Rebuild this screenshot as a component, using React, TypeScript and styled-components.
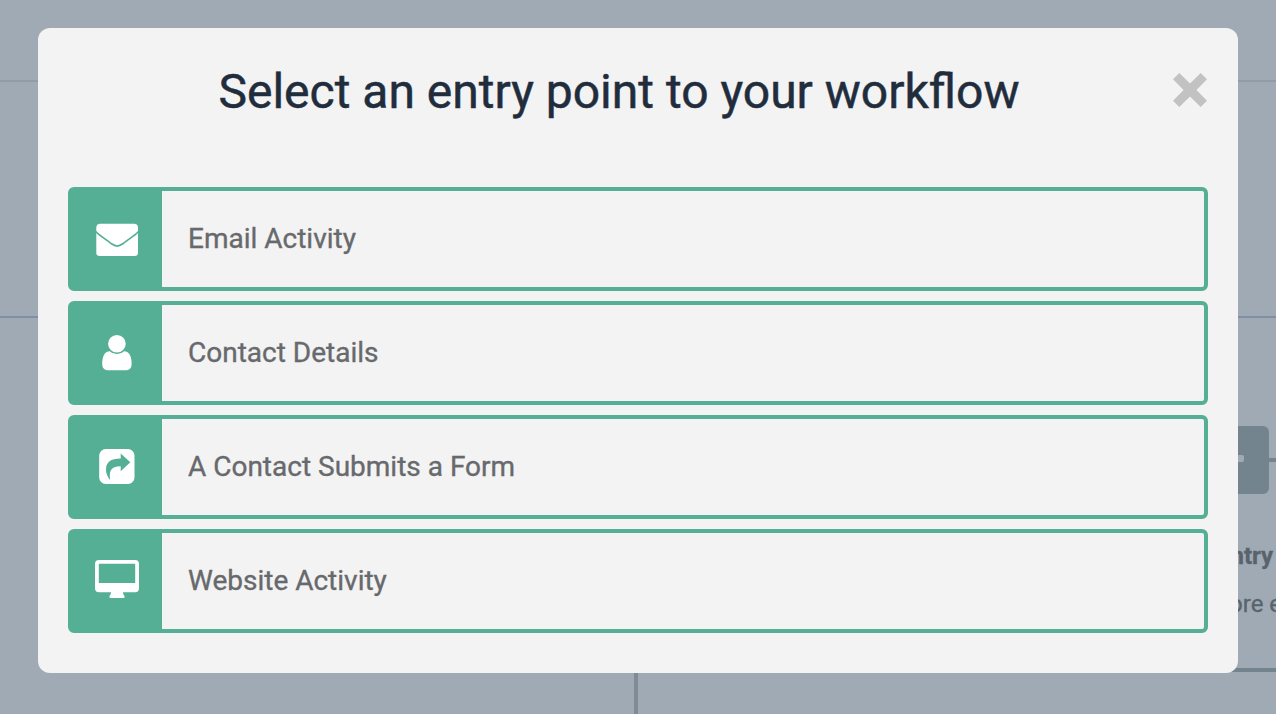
import React from "react";
import styled, { createGlobalStyle } from "styled-components";

const GlobalStyle = createGlobalStyle`
  *, *::before, *::after { box-sizing: border-box; }
  html, body { margin: 0; padding: 0; height: 100%; overflow: hidden; }
  body { font-family: Roboto, "Liberation Sans", sans-serif; background: #a0aab4; -webkit-font-smoothing: antialiased; }
`;

const Page = styled.main`
  position: relative;
  height: 714px;
  padding: 28px 38px 0;
  overflow: hidden;
  background: #a0aab4;
`;

/* Dimmed workflow canvas behind the dialog */
const Canvas = styled.div`
  position: absolute;
  inset: 0;
`;

const Line = styled.div<{ $x: number; $y: number; $w: number; $h: number; $color: string }>`
  position: absolute;
  left: ${(p) => p.$x}px;
  top: ${(p) => p.$y}px;
  width: ${(p) => p.$w}px;
  height: ${(p) => p.$h}px;
  background: ${(p) => p.$color};
`;

const AddNode = styled.div`
  position: absolute;
  left: 1201px;
  top: 426px;
  width: 68px;
  height: 68px;
  border-radius: 6px;
  background: #74848e;

  &::after {
    content: "";
    position: absolute;
    left: 25px;
    top: 29px;
    width: 18px;
    height: 7px;
    border-radius: 2px;
    background: #a0aab4;
  }
`;

const NodeLabel = styled.div<{ $x: number; $y: number; $bold?: boolean }>`
  position: absolute;
  left: ${(p) => p.$x}px;
  top: ${(p) => p.$y}px;
  font-size: 24px;
  line-height: 28px;
  font-weight: ${(p) => (p.$bold ? 700 : 400)};
  color: #59636d;
  -webkit-text-stroke: 0.3px #59636d;
  white-space: nowrap;
`;

const Dialog = styled.section`
  position: relative;
  width: 1200px;
  height: 645px;
  padding: 0 30px;
  border-radius: 12px;
  background: #f3f3f3;
`;

const Header = styled.header`
  display: flex;
  align-items: flex-start;
  height: 159px;
  padding-top: 36px;
`;

const Title = styled.h1`
  flex: 1;
  margin: 0;
  padding-right: 2px;
  font-size: 48px;
  line-height: 56px;
  font-weight: 400;
  text-align: center;
  color: #212d3d;
  -webkit-text-stroke: 0.5px #212d3d;
`;

const CloseButton = styled.button`
  display: flex;
  width: 36px;
  height: 36px;
  margin: 8px 0 0;
  padding: 0;
  border: 0;
  background: none;
`;

const Options = styled.div`
  display: flex;
  flex-direction: column;
  gap: 10px;
`;

const Option = styled.button`
  display: flex;
  align-items: stretch;
  height: 104px;
  padding: 0;
  border: 4px solid #54af95;
  border-radius: 6px;
  background: #f3f3f3;
  font-family: inherit;
  text-align: left;
`;

const IconCell = styled.span`
  display: flex;
  align-items: center;
  justify-content: center;
  width: 90px;
  background: #54af95;
`;

const OptionLabel = styled.span`
  align-self: center;
  padding-left: 26px;
  font-size: 28px;
  line-height: 34px;
  color: #67696c;
  -webkit-text-stroke: 0.35px #67696c;
`;

const Glyph = styled.svg`
  display: block;
  width: 90px;
  height: 96px;
`;

const EmailIcon = () => (
  <Glyph viewBox="0 0 90 96">
    <path
      d="M28.300 32.700H62Q66 32.700 66 36.700V61.800Q66 65 62.800 65H27.500Q24.300 65 24.300 61.800V36.700Q24.300 32.700 28.300 32.700Z"
      fill="#fff"
    />
    <path
      d="M23.500 40.300C27 44.300 34.500 48.800 39.500 52.800Q42.800 55.100 45.150 55.100T50.800 52.800C55.800 48.800 63.300 44.300 66.800 40.300"
      fill="none"
      stroke="#54af95"
      strokeWidth="1.700"
    />
  </Glyph>
);

const ContactIcon = () => (
  <Glyph viewBox="0 0 90 96" fill="#fff">
    <path
      transform="translate(24.3 27) scale(0.02300)"
      d="M1536 1399q0 109-62.500 187t-150.500 78h-854q-88 0-150.500-78t-62.500-187q0-85 8.500-160.500t31.500-152 58.500-131 94-89 134.500-34.500q131 128 313 128t313-128q76 0 134.500 34.500t94 89 58.500 131 31.500 152 8.500 160.500zm-256-887q0 159-112.500 271.500t-271.500 112.500-271.500-112.500-112.500-271.500 112.500-271.500 271.500-112.500 271.500 112.500 112.500 271.500z"
    />
  </Glyph>
);

const FormIcon = () => (
  <Glyph viewBox="0 0 90 96">
    <rect x="27.2" y="30" width="35.3" height="35" rx="6.5" fill="#fff" />
    <path
      d="M48.700 34.400V39.600C38.500 39.600 34 43.500 34 50.500C34 54.500 35.700 58 37.700 60.500Q38.300 61 38.100 60C37.200 53 38 47.500 48.700 47.300V52.200L58.300 43.300Z"
      fill="#54af95"
    />
  </Glyph>
);

const WebsiteIcon = () => (
  <Glyph viewBox="0 0 90 96">
    <path
      fill="#fff"
      fillRule="evenodd"
      d="M27 27H63Q67 27 67 31V55.300Q67 59.300 63 59.300H27Q23 59.300 23 55.300V31Q23 27 27 27ZM27.500 30.700Q26.800 30.700 26.800 31.400V50H63.200V31.400Q63.200 30.700 62.500 30.700Z"
    />
    <path fill="#fff" d="M39.200 59H50.800Q51.100 61.200 52.300 62.800Q53.300 65 51.300 65H38.700Q36.700 65 37.700 62.800Q38.900 61.200 39.200 59Z" />
  </Glyph>
);

const CloseIcon = () => (
  <svg width="36" height="36" viewBox="0 0 36 36">
    <path
      d="M1 7.300L7.300 1L18 11.600L28.700 1L35 7.300L24.400 18L35 28.700L28.700 35L18 24.400L7.300 35L1 28.700L11.600 18Z"
      fill="#c2c2c2"
    />
  </svg>
);

const entryPoints = [
  { label: "Email Activity", Icon: EmailIcon },
  { label: "Contact Details", Icon: ContactIcon },
  { label: "A Contact Submits a Form", Icon: FormIcon },
  { label: "Website Activity", Icon: WebsiteIcon },
];

export default function App() {
  return (
    <Page>
      <GlobalStyle />
      <Canvas>
        <Line $x={0} $y={80} $w={1276} $h={2} $color="#929ca8" />
        <Line $x={0} $y={316} $w={1276} $h={2} $color="#808fa5" />
        <Line $x={634} $y={660} $w={4} $h={54} $color="#808b96" />
        <Line $x={1269} $y={458} $w={7} $h={4} $color="#74848e" />
        <Line $x={1200} $y={668} $w={76} $h={4} $color="#74848e" />
        <AddNode />
        <NodeLabel $x={1217.5} $y={542} $bold>entry</NodeLabel>
        <NodeLabel $x={1208} $y={590}>more e</NodeLabel>
      </Canvas>
      <Dialog role="dialog" aria-labelledby="dialog-title">
        <Header>
          <Title id="dialog-title">Select an entry point to your workflow</Title>
          <CloseButton aria-label="Close">
            <CloseIcon />
          </CloseButton>
        </Header>
        <Options>
          {entryPoints.map(({ label, Icon }) => (
            <Option key={label}>
              <IconCell>
                <Icon />
              </IconCell>
              <OptionLabel>{label}</OptionLabel>
            </Option>
          ))}
        </Options>
      </Dialog>
    </Page>
  );
}
